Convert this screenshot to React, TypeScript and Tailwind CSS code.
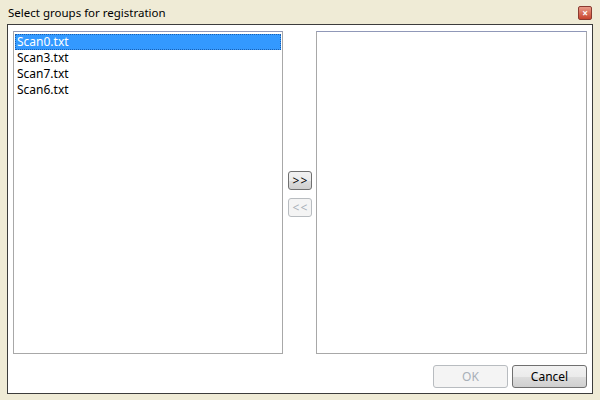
import React from "react";

const font = { fontFamily: '"Noto Sans", "Open Sans", sans-serif' };

function Btn({ label, disabled, className }: { label: string; disabled?: boolean; className?: string }) {
  return (
    <div
      className={
        "flex items-center justify-center rounded-[3px] border text-[12px] leading-none " +
        (disabled
          ? "border-[#b8bcc0] bg-[#f4f4f4] text-[#a8b0b8] "
          : "border-[#707070] bg-[linear-gradient(#f2f2f2_0%,#ebebeb_50%,#dddddd_51%,#cfcfcf_100%)] text-black ") +
        (className ?? "")
      }
    >
      {label}
    </div>
  );
}

export default function App() {
  const items = ["Scan0.txt", "Scan3.txt", "Scan7.txt", "Scan6.txt"];
  return (
    <div className="w-[600px] h-[400px] bg-[#efebd6] flex flex-col overflow-hidden" style={font}>
      <div className="h-[24px] shrink-0 flex items-center pl-[8px] pr-[8px]">
        <span className="text-[11.5px] text-black leading-none mt-[2px]">Select groups for registration</span>
        <div className="ml-auto mt-[2px] w-[14px] h-[14px] rounded-[2px] border border-[#8a3a30] bg-[linear-gradient(#e89a88,#c8442e)] flex items-center justify-center text-white text-[10px] font-bold leading-none">
          ×
        </div>
      </div>
      <div className="mx-[7px] mb-[6px] flex-1 border border-[#3c3c3c] bg-white flex flex-col px-[5px] pt-[6px] pb-[5px]">
        <div className="flex h-[323px]">
          <div className="w-[270px] h-full border border-[#a8a8a8] border-t-[#9098b8] px-[1px] pt-[2px]">
            {items.map((t, i) => (
              <div
                key={t}
                className={
                  "h-[16px] pl-[2px] text-[12px] leading-[16px] " +
                  (i === 0 ? "bg-[#3399ff] text-white outline-1 outline-dotted -outline-offset-1 outline-[#1a5fb0]" : "text-black")
                }
              >
                {t}
              </div>
            ))}
          </div>
          <div className="w-[33px] flex flex-col items-center pt-[140px] gap-[8px]">
            <Btn label="> >" className="w-[24px] h-[19px] text-[11px] tracking-[-1px]" />
            <Btn label="< <" disabled className="w-[24px] h-[19px] text-[11px] tracking-[-1px]" />
          </div>
          <div className="w-[271px] h-full border border-[#a8a8a8] border-t-[#9098b8]" />
        </div>
        <div className="flex justify-end gap-[4px] mt-[11px]">
          <Btn label="OK" disabled className="w-[75px] h-[23px]" />
          <Btn label="Cancel" className="w-[75px] h-[23px]" />
        </div>
      </div>
    </div>
  );
}
